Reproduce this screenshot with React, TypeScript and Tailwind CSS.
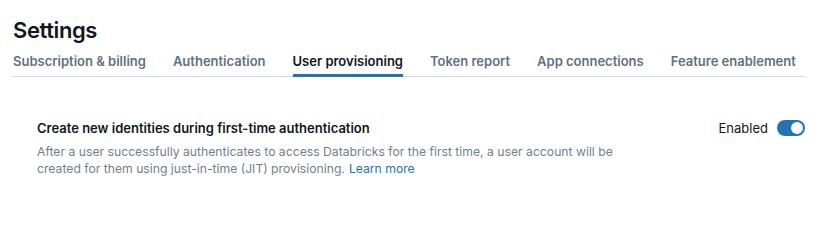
const tabs = [
  "Subscription & billing",
  "Authentication",
  "User provisioning",
  "Token report",
  "App connections",
  "Feature enablement",
];

const ACTIVE = "User provisioning";

export default function App() {
  return (
    <div
      className="min-h-[200px] bg-white px-[13px] pt-[16px] text-[#11171c]"
      style={{ fontFamily: "Inter, 'Noto Sans', sans-serif" }}
    >
      <h1 className="text-[22px] font-semibold leading-[28px] tracking-[-0.4px]">Settings</h1>
      <div className="mt-[7px] flex w-[792px] gap-[27px] whitespace-nowrap border-b border-[#d1d9e1]">
        {tabs.map((t) => (
          <div
            key={t}
            className={
              t === ACTIVE
                ? "-mb-px shrink-0 border-b-[3px] border-[#2272b4] pb-[3px] text-[13px] font-semibold leading-[20px] text-[#11171c]"
                : "shrink-0 pb-[5px] text-[13px] font-semibold leading-[20px] text-[#5f7281]"
            }
          >
            {t}
          </div>
        ))}
      </div>

      <div className="mt-[41px] flex justify-between pl-[24px] pr-[1px]">
        <div>
          <div className="text-[13px] font-semibold leading-[20px] text-[#11171c]">
            Create new identities during first-time authentication
          </div>
          <p className="mt-[5px] w-[600px] text-[12.2px] leading-[17px] text-[#6f7f8f]">
            After a user successfully authenticates to access Databricks for the first time, a user account will be
            created for them using just-in-time (JIT) provisioning.
            <a className="ml-[4px] text-[#2272b4]" href="#">
              Learn more
            </a>
          </p>
        </div>
        <div className="flex h-[20px] items-center gap-[9px]">
          <span className="text-[13px] leading-[20px] text-[#11171c]">Enabled</span>
          <span className="flex h-[16px] w-[28px] items-center justify-end rounded-full bg-[#2272b4] px-[2px]">
            <span className="h-[12px] w-[12px] rounded-full bg-white" />
          </span>
        </div>
      </div>
    </div>
  );
}
